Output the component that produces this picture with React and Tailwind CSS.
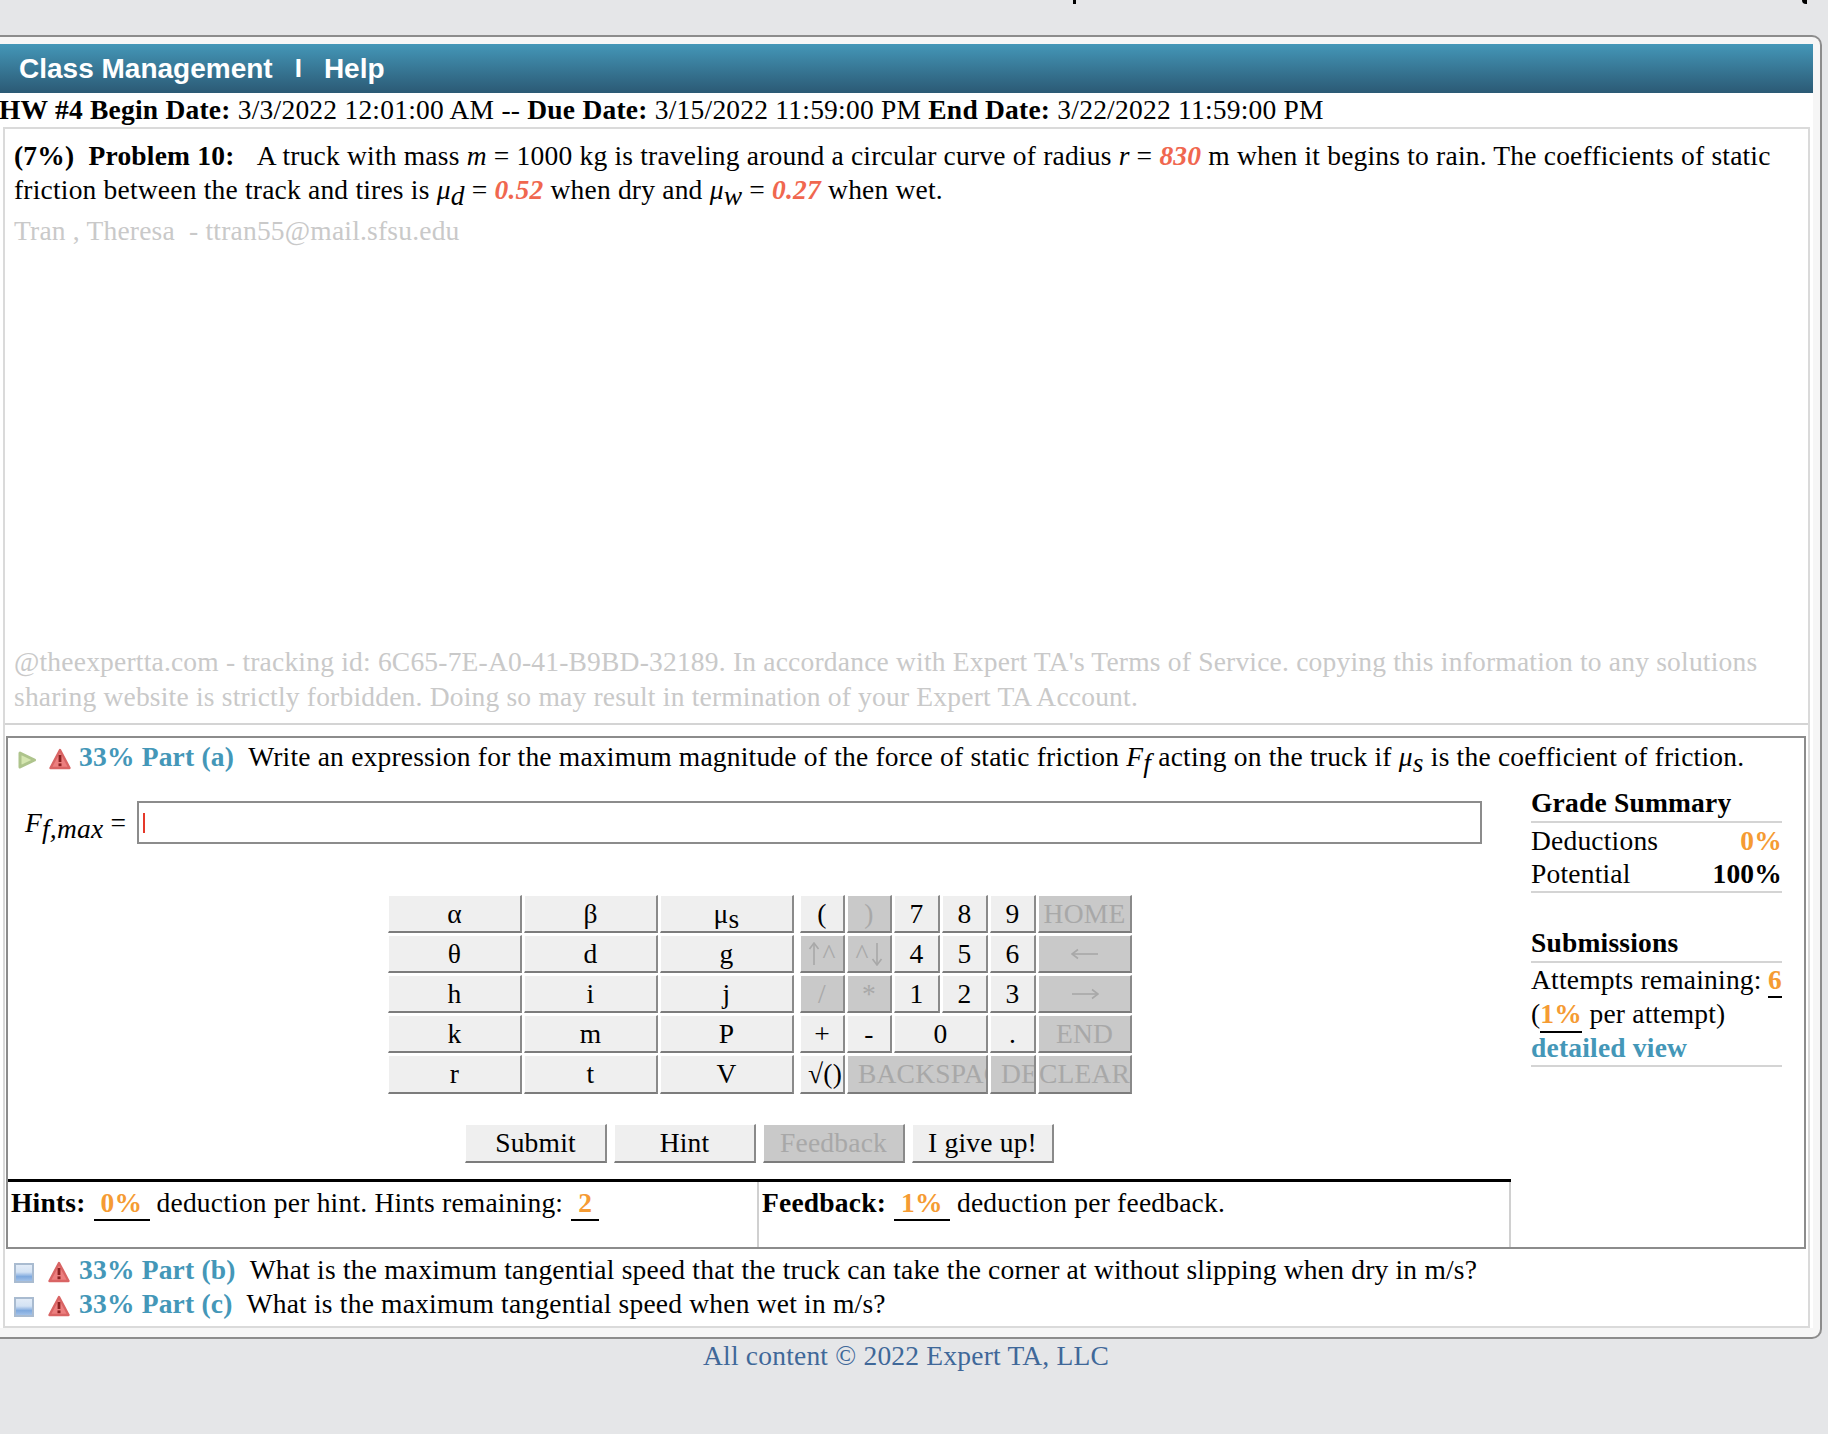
const teal = 'text-[#4497b8]'
const keyBase =
  'flex items-center justify-center overflow-hidden whitespace-nowrap border-t border-l border-t-white border-l-white border-r-2 border-b-2 border-r-[#8a8a8a] border-b-[#7c7c7c] h-full'

function Key({ children, off, span = '', className = '' }) {
  return (
    <div
      className={`${keyBase} ${span} ${className} ${off ? 'bg-[#c9c9c9] text-[#a8a8a8]' : 'bg-[#efefef] text-black'}`}
    >
      {children}
    </div>
  )
}

function Play() {
  return (
    <svg width="20" height="20" viewBox="0 0 20 20" className="shrink-0 mt-[5px]">
      <path d="M3 3 L17.5 10 L3 17 Z" fill="#d5e6b0" stroke="#aec48c" strokeWidth="3" strokeLinejoin="round" />
    </svg>
  )
}

function Warn() {
  return (
    <svg width="22" height="23" viewBox="0 0 22 23" className="shrink-0 mt-[5px]">
      <path d="M11 2 L20.5 20 H1.5 Z" fill="#ec7f7f" stroke="#d96464" strokeWidth="2.4" strokeLinejoin="round" />
      <path d="M11 7 V14" stroke="#8a2020" strokeWidth="2.8" />
      <rect x="9.5" y="15.4" width="3" height="2.8" fill="#8a2020" />
    </svg>
  )
}

function BlueBox() {
  return (
    <svg width="20" height="20" viewBox="0 0 20 20" className="shrink-0 mt-[5px]">
      <defs>
        <linearGradient id="bb" x1="0" y1="0" x2="0" y2="1">
          <stop offset="0" stopColor="#e4edf8" />
          <stop offset="0.45" stopColor="#d3e2f4" />
          <stop offset="0.7" stopColor="#7fa9de" />
          <stop offset="1" stopColor="#a9c6ea" />
        </linearGradient>
      </defs>
      <rect x="1" y="1" width="18" height="18" fill="url(#bb)" stroke="#a9bbd0" strokeWidth="2" />
    </svg>
  )
}

function ArrowV({ down }) {
  return (
    <svg width="12" height="24" viewBox="0 0 12 24" fill="none" stroke="#a8a8a8" strokeWidth="1.6" className="shrink-0">
      <path d="M6 1 V23" />
      {down ? <path d="M1.5 17 L6 23 L10.5 17" /> : <path d="M1.5 7 L6 1 L10.5 7" />}
    </svg>
  )
}

function ArrowH({ left }) {
  return (
    <svg width="28" height="12" viewBox="0 0 28 12" fill="none" stroke="#a8a8a8" strokeWidth="1.6">
      <path d="M1 6 H27" />
      {left ? <path d="M7 1.5 L1 6 L7 10.5" /> : <path d="M21 1.5 L27 6 L21 10.5" />}
    </svg>
  )
}

function Sub({ base, sub }) {
  return (
    <i>
      {base}
      <span className="align-[-6px] leading-[0]">{sub}</span>
    </i>
  )
}

function Rule({ className = '' }) {
  return <div className={`h-[2px] bg-[#d4d4d4] ${className}`} />
}

export default function App() {
  return (
    <div className="w-[1828px] h-[1434px] overflow-hidden bg-[#e5e6e8] text-black font-['Liberation_Serif',serif] text-[27.5px] tracking-[0.2px]">
      <div className="h-[35px] flex items-start">
        <div className="ml-[1073px] w-[3px] h-[4px] bg-black" />
        <div className="ml-[726px] w-[5px] h-[4px] rounded-bl-[4px] bg-black" />
      </div>

      <div className="w-[1822px] h-[1304px] pt-[7px] bg-[#f6f6f6] border-t-2 border-r-2 border-b-2 border-[#8c8c8c] rounded-r-[10px]">
        <div className="h-[49px] mr-[7px] pl-[19px] flex items-center gap-[22px] bg-gradient-to-b from-[#4497b8] to-[#2b5a75] text-white font-['Liberation_Sans',sans-serif] font-bold text-[28px] tracking-normal">
          <span>Class Management</span>
          <span className="text-[26px]">I</span>
          <span>Help</span>
        </div>

        <div className="mr-[7px] h-[1235px] bg-white">
          <div className="h-[34px] leading-[34px] whitespace-nowrap -ml-[1px] tracking-[0.222px]">
            <b>HW #4 Begin Date:</b> 3/3/2022 12:01:00 AM -- <b>Due Date:</b> 3/15/2022 11:59:00 PM <b>End Date:</b> 3/22/2022 11:59:00 PM
          </div>

          <div className="ml-[3px] mr-[3px] h-[1201px] border-2 border-[#dadada]">
            <div className="pl-[9px] pt-[10px] h-[515px]">
              <div className="h-[34px] leading-[34px] whitespace-nowrap">
                <b>(7%)&nbsp; Problem 10:</b>&nbsp;&nbsp; <span className="ml-[1px]">A truck with mass <i>m</i> = 1000 kg is traveling around a circular curve of radius <i>r</i> = <b className="italic text-[#f0674f]">830</b> m when it begins to rain. The coefficients of static</span>
              </div>
              <div className="h-[34px] leading-[34px] whitespace-nowrap">
                friction between the track and tires is <Sub base="μ" sub="d" /> = <b className="italic text-[#f0674f]">0.52</b> when dry and <Sub base="μ" sub="w" /> = <b className="italic text-[#f0674f]">0.27</b> when wet.
              </div>
              <div className="mt-[7px] h-[34px] leading-[34px] text-[#c9c9c9]">Tran , Theresa&nbsp; - ttran55@mail.sfsu.edu</div>
            </div>
            <div className="pl-[9px] h-[70px] text-[#c9c9c9] leading-[35px] whitespace-nowrap">
              <div>@theexpertta.com - tracking id: 6C65-7E-A0-41-B9BD-32189. In accordance with Expert TA's Terms of Service. copying this information to any solutions</div>
              <div>sharing website is strictly forbidden. Doing so may result in termination of your Expert TA Account.</div>
            </div>
            <Rule className="mt-[9px]" />

            <div className="mt-[11px] ml-[1px] mr-[2px] h-[513px] border-2 border-[#8c8c8c] flex flex-col">
              <div className="h-[38px] shrink-0 flex items-center whitespace-nowrap pl-[9px]">
                <Play />
                <span className="ml-[12px]"><Warn /></span>
                <b className={`ml-[8px] ${teal}`}>33% Part (a)</b>
                <span className="ml-[14px]">
                  Write an expression for the maximum magnitude of the force of static friction <Sub base="F" sub="f" /> acting on the truck if <Sub base="μ" sub="s" /> is the coefficient of friction.
                </span>
              </div>

              <div className="flex flex-1">
                <div className="w-[1503px] flex flex-col">
                  <div className="mt-[25px] h-[43px] flex items-center">
                    <div className="w-[129px] pl-[17px] whitespace-nowrap"><Sub base="F" sub="f,max" /> =</div>
                    <div className="w-[1345px] h-[43px] border-2 border-[#8c8c8c] flex items-center pl-[4px]">
                      <div className="w-[2px] h-[20px] bg-[#e5392a]" />
                    </div>
                  </div>

                  <div className="mt-[51px] ml-[380px] flex gap-[6px]">
                    <div className="grid grid-cols-[134px_134px_134px] grid-rows-[38px_38px_38px_38px_39px] gap-[2px]">
                      {['α', 'β', null, 'θ', 'd', 'g', 'h', 'i', 'j', 'k', 'm', 'P', 'r', 't', 'V'].map((k, i) => (
                        <Key key={i}>{k ?? <span>μ<span className="align-[-5px] leading-[0]">s</span></span>}</Key>
                      ))}
                    </div>
                    <div className="grid grid-cols-[45px_45px_46px_46px_46px_94px] grid-rows-[38px_38px_38px_38px_39px] gap-[2px]">
                      <Key>(</Key>
                      <Key off>)</Key>
                      <Key>7</Key>
                      <Key>8</Key>
                      <Key>9</Key>
                      <Key off>HOME</Key>
                      <Key off className="gap-[2px]"><ArrowV /><span>^</span></Key>
                      <Key off className="gap-[2px]"><span>^</span><ArrowV down /></Key>
                      <Key>4</Key>
                      <Key>5</Key>
                      <Key>6</Key>
                      <Key off><ArrowH left /></Key>
                      <Key off>/</Key>
                      <Key off>*</Key>
                      <Key>1</Key>
                      <Key>2</Key>
                      <Key>3</Key>
                      <Key off><ArrowH /></Key>
                      <Key>+</Key>
                      <Key>-</Key>
                      <Key span="col-span-2">0</Key>
                      <Key>.</Key>
                      <Key off>END</Key>
                      <Key className="justify-start pl-[7px]">√()</Key>
                      <Key off span="col-span-3" className="justify-start pl-[10px]">BACKSPACE</Key>
                      <Key off className="justify-start pl-[10px]">DEL</Key>
                      <Key off>CLEAR</Key>
                    </div>
                  </div>

                  <div className="mt-[30px] ml-[457px] flex gap-[7px] h-[39px]">
                    <Key className="w-[142px]">Submit</Key>
                    <Key className="w-[142px]">Hint</Key>
                    <Key off className="w-[142px]">Feedback</Key>
                    <Key className="w-[142px]">I give up!</Key>
                  </div>

                  <div className="mt-[16px] h-[3px] bg-black" />
                  <div className="flex flex-1 whitespace-nowrap">
                    <div className="w-[751px] pl-[3px] pt-[3px] leading-[36px] border-r-2 border-[#d0d0d0]">
                      <b>Hints:</b>
                      <b className="inline-block ml-[8px] px-[7px] w-[56px] h-[36px] border-b-2 border-black text-[#f59b33]">0%</b>
                      <span className="ml-[7px]">deduction per hint. Hints remaining:</span>
                      <b className="inline-block ml-[8px] w-[28px] h-[36px] border-b-2 border-black text-center text-[#f59b33]">2</b>
                    </div>
                    <div className="w-[752px] pl-[3px] pt-[3px] leading-[36px] border-r-2 border-[#d0d0d0]">
                      <b>Feedback:</b>
                      <b className="inline-block ml-[8px] px-[7px] w-[56px] h-[36px] border-b-2 border-black text-[#f59b33]">1%</b>
                      <span className="ml-[7px]">deduction per feedback.</span>
                    </div>
                  </div>
                </div>

                <div className="w-[251px] ml-[20px] pt-[10px] leading-[34px] whitespace-nowrap">
                  <b className="block h-[34px]">Grade Summary</b>
                  <Rule className="mt-[1px]" />
                  <div className="flex justify-between h-[33px] mt-[1px]"><span>Deductions</span><b className="text-[#f59b33]">0%</b></div>
                  <div className="flex justify-between h-[33px]"><span>Potential</span><b>100%</b></div>
                  <Rule className="mt-[1px]" />
                  <b className="block h-[34px] mt-[33px]">Submissions</b>
                  <Rule className="mt-[1px]" />
                  <div className="h-[34px] flex justify-between">
                    <span>Attempts remaining:</span>
                    <b className="w-[14px] h-[35px] border-b-2 border-black text-[#f59b33]">6</b>
                  </div>
                  <div className="h-[34px]">
                    (<b className="inline-block w-[42px] h-[36px] border-b-2 border-black text-[#f59b33]">1%</b> per attempt)
                  </div>
                  <b className={`block h-[34px] ${teal}`}>detailed view</b>
                  <Rule />
                </div>
              </div>
            </div>

            <div className="h-[34px] mt-[4px] flex items-center whitespace-nowrap pl-[9px]">
              <BlueBox />
              <span className="ml-[14px]"><Warn /></span>
              <b className={`ml-[9px] ${teal}`}>33% Part (b)</b>
              <span className="ml-[14px]">What is the maximum tangential speed that the truck can take the corner at without slipping when dry in m/s?</span>
            </div>
            <div className="h-[34px] flex items-center whitespace-nowrap pl-[9px]">
              <BlueBox />
              <span className="ml-[14px]"><Warn /></span>
              <b className={`ml-[9px] ${teal}`}>33% Part (c)</b>
              <span className="ml-[14px]">What is the maximum tangential speed when wet in m/s?</span>
            </div>
          </div>
        </div>
      </div>

      <div className="w-[1812px] h-[34px] leading-[34px] text-center text-[#3f6899]">All content © 2022 Expert TA, LLC</div>
    </div>
  )
}
